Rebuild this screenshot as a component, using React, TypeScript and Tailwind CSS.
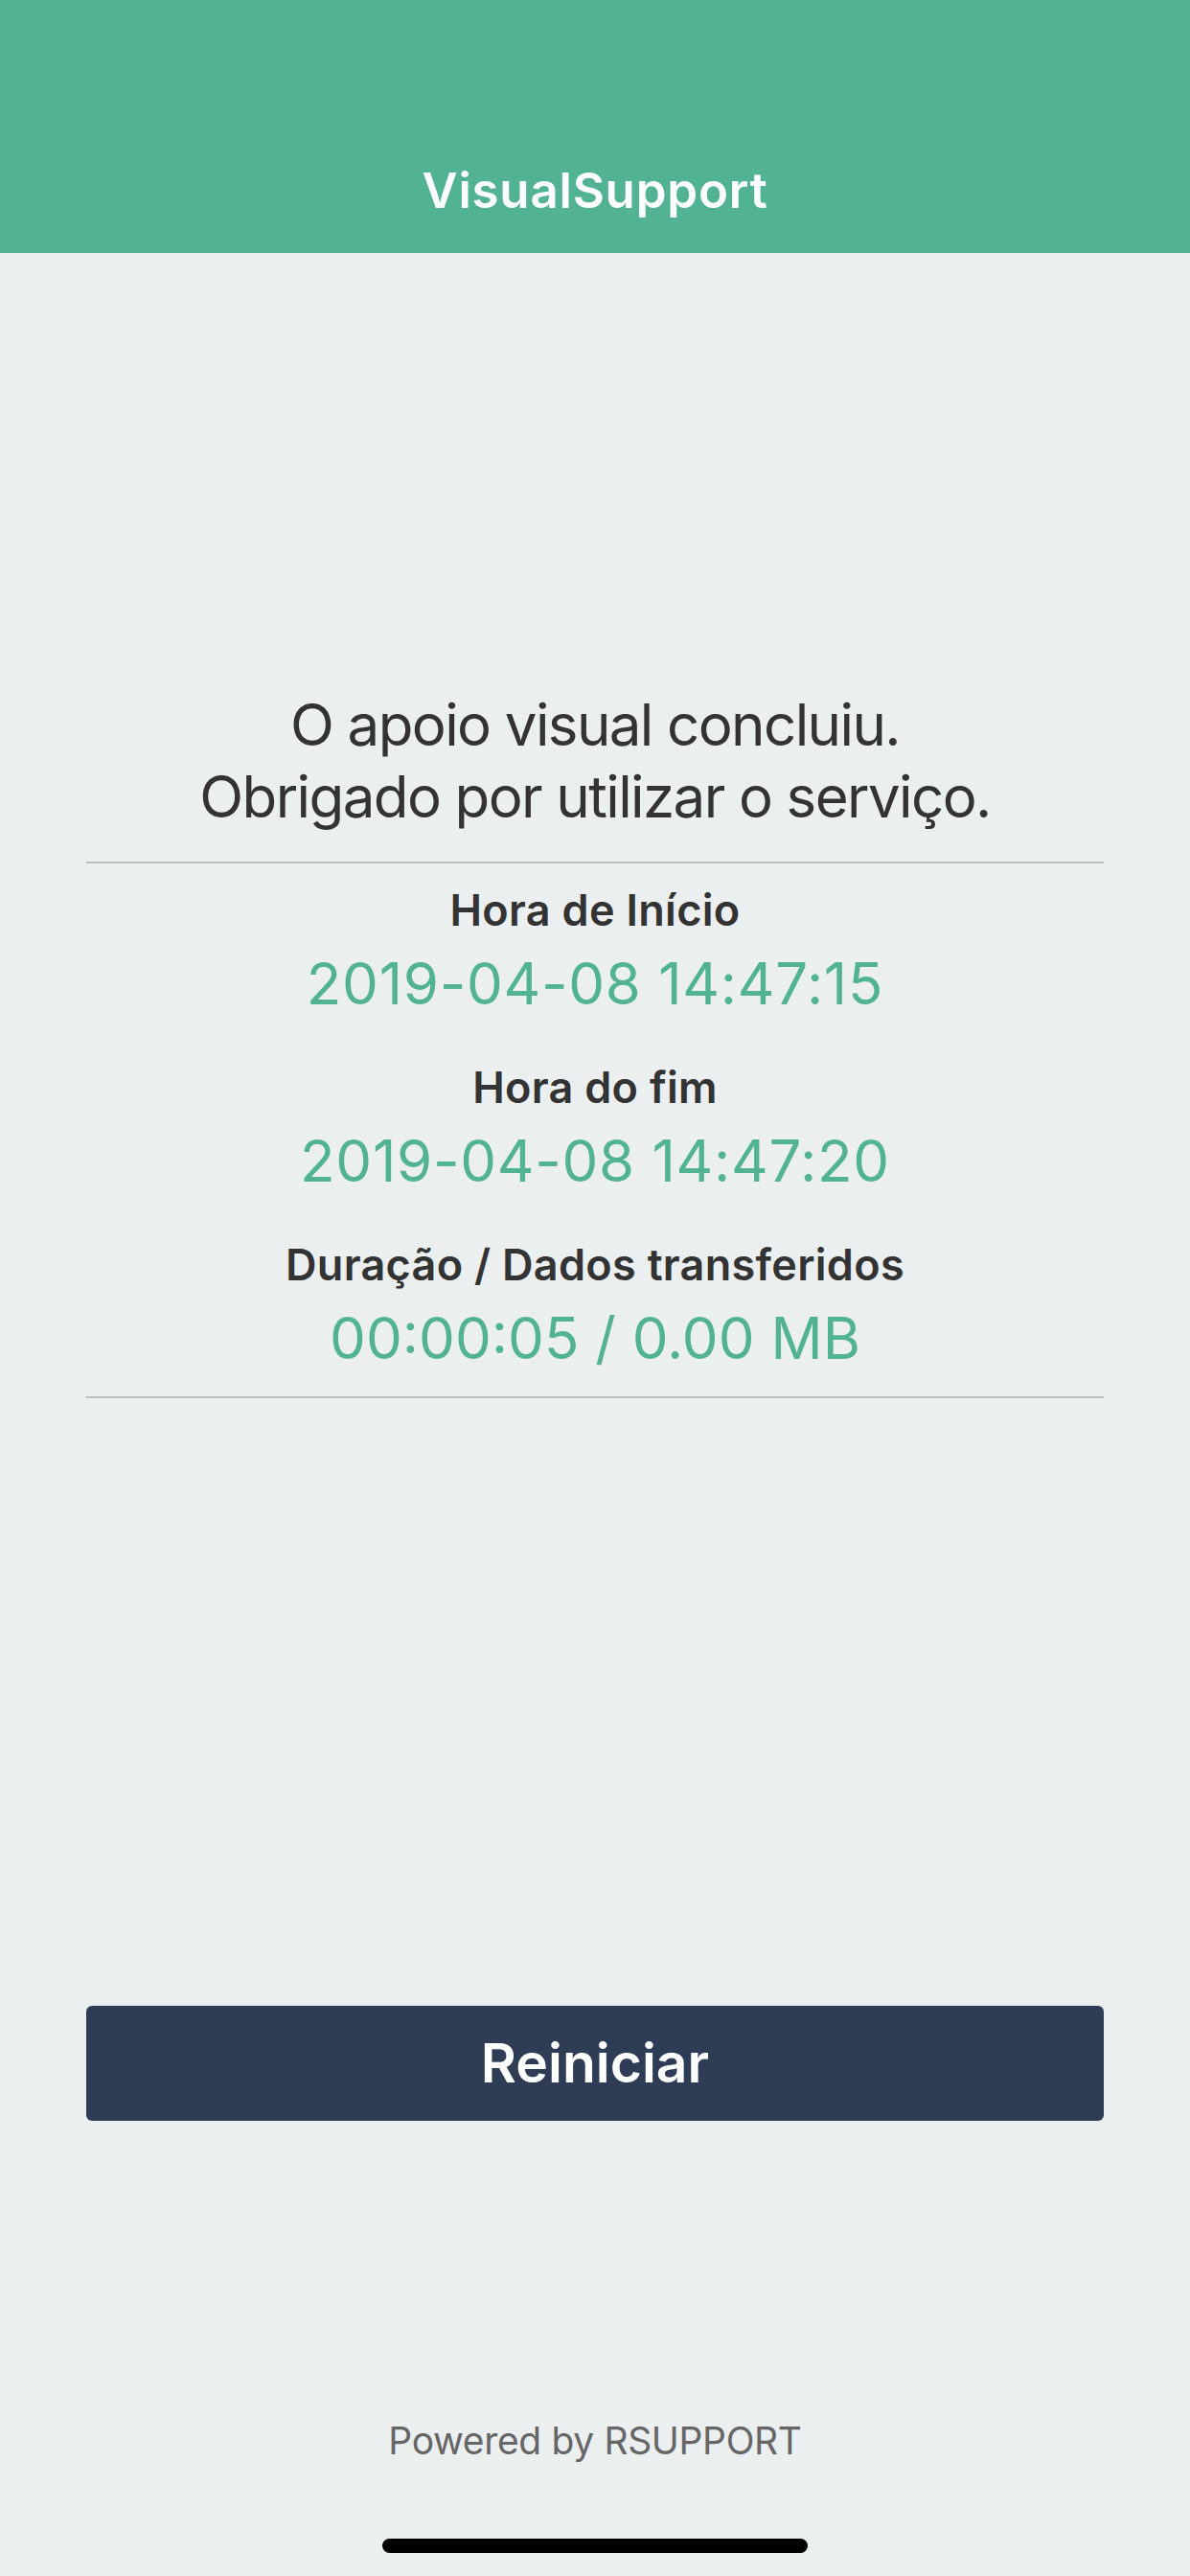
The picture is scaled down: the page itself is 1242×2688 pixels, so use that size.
import React from "react";

export default function App() {
  const font = { fontFamily: "Inter, 'Noto Sans', sans-serif" };
  return (
    <div
      className="flex min-h-[2688px] w-[1242px] flex-col bg-[#ebeff0] text-[#333333]"
      style={font}
    >
      <header className="flex h-[264px] flex-col bg-[#52b394]">
        <div className="h-[132px]" />
        <div className="flex h-[132px] items-center justify-center">
          <span className="text-[51px] font-semibold leading-none tracking-[0.8px] text-white">VisualSupport</span>
        </div>
      </header>

      <main className="flex flex-col items-center">
        <div className="mt-[455px] text-center text-[60px] leading-[75px] tracking-[-1.6px]">
          <p>O apoio visual concluiu.</p>
          <p>Obrigado por utilizar o serviço.</p>
        </div>

        <div className="mt-[30px] h-[2px] w-[1062px] bg-[#bdbdbd]" />

        <div className="flex flex-col items-center text-center">
          <p className="mt-[22px] text-[45px] font-semibold leading-[54px] tracking-[0.3px]">Hora de Início</p>
          <p className="mt-[12px] text-[60px] leading-[75px] tracking-[0.7px] text-[#52b394]">2019-04-08 14:47:15</p>
          <p className="mt-[44px] text-[45px] font-semibold leading-[54px] tracking-[0.3px]">Hora do fim</p>
          <p className="mt-[12px] text-[60px] leading-[75px] tracking-[0.7px] text-[#52b394]">2019-04-08 14:47:20</p>
          <p className="mt-[44px] text-[45px] font-semibold leading-[54px] tracking-[0.3px]">Duração / Dados transferidos</p>
          <p className="mt-[12px] text-[60px] leading-[75px] text-[#52b394]">00:00:05 / 0.00 MB</p>
        </div>

        <div className="mt-[23px] h-[2px] w-[1062px] bg-[#bdbdbd]" />

        <button className="mt-[634px] flex h-[120px] w-[1062px] items-center justify-center rounded-[6px] bg-[#2e3d55] text-[57px] font-semibold text-white">
          Reiniciar
        </button>

        <p className="mt-[310px] text-[39px] leading-[47px] tracking-[-0.35px] text-[#666666]">Powered by RSUPPORT</p>

        <div className="mt-[79px] h-[15px] w-[444px] rounded-full bg-black" />
      </main>
    </div>
  );
}
